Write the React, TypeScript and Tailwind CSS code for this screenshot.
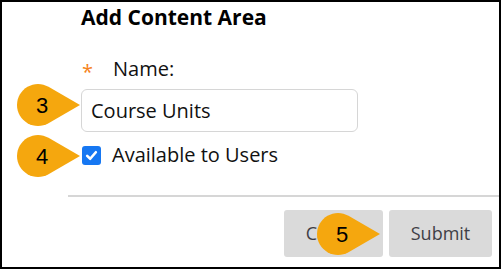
import React from 'react';

function Badge({ n, className }: { n: string; className: string }) {
  return (
    <div className={`absolute w-[63px] h-[42px] ${className}`}>
      <svg width="63" height="42" viewBox="0 0 63 42" className="absolute inset-0">
        <path d="M63 21 L31.5 2.8 A21 21 0 1 0 31.5 39.2 Z" fill="#f5a70e" />
      </svg>
      <span className="absolute left-0 top-0 w-[50px] h-[42px] flex items-center justify-center font-['Liberation_Sans',Arial,sans-serif] text-[22px] text-black">
        {n}
      </span>
    </div>
  );
}

export default function App() {
  return (
    <div className="relative w-[501px] h-[269px] border-2 border-black bg-white overflow-hidden font-['Open_Sans',sans-serif] text-[#111]">
      <div className="pl-[79px]">
        <h2 className="pt-[1px] text-[21px] leading-[28px] font-bold text-black">Add Content Area</h2>

        <div className="mt-[24px] flex items-center h-[28px] text-[20px]">
          <span className="ml-[1px] w-[31px] text-[#f58220] text-[20px] leading-none pt-[6px]">*</span>
          <span>Name:</span>
        </div>

        <div className="mt-[6px] w-[277px] h-[43px] border border-[#d6d6d6] rounded-[6px] pl-[9px] flex items-center text-[20px]">
          Course Units
        </div>

        <div className="mt-[12px] flex items-center h-[22px] text-[20px]">
          <span className="ml-[1px] w-[19px] h-[19px] rounded-[3px] bg-[#1677f2] flex items-center justify-center">
            <svg width="13" height="13" viewBox="0 0 12 12">
              <path d="M2 6.3 L4.8 9 L10 3" fill="none" stroke="white" strokeWidth="2.4" strokeLinecap="round" strokeLinejoin="round" />
            </svg>
          </span>
          <span className="ml-[11px]">Available to Users</span>
        </div>
      </div>

      <div className="mt-[29px] ml-[66px] h-[2px] bg-[#d6d6d6]" />

      <div className="mt-[13px] flex justify-end gap-[6px] pr-[7px] text-[18px] text-[#3f3f46]">
        <button className="w-[99px] h-[47px] rounded-[3px] bg-[#dadada]">Cancel</button>
        <button className="w-[103px] h-[47px] rounded-[3px] bg-[#dadada]">Submit</button>
      </div>

      <Badge n="3" className="left-[15px] top-[82px]" />
      <Badge n="4" className="left-[15px] top-[133px]" />
      <Badge n="5" className="left-[315px] top-[211px]" />
    </div>
  );
}
